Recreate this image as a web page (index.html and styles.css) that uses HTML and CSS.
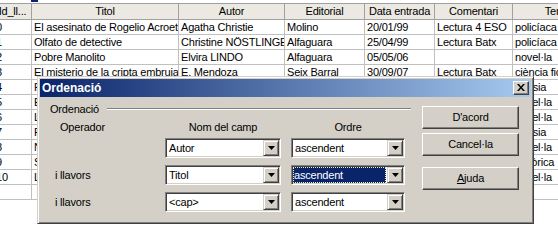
FILE: index.html
```html
<!DOCTYPE html>
<html>
<head>
<meta charset="utf-8">
<link rel="stylesheet" href="styles.css">
</head>
<body>
<div class="topstrip"><span class="tab"></span></div>
<div class="sheet">
  <div class="h">Id_ll...</div><div class="h">Titol</div><div class="h">Autor</div><div class="h">Editorial</div><div class="h">Data entrada</div><div class="h">Comentari</div><div class="h">Temàtica</div>

  <div>0</div><div>El asesinato de Rogelio Acroetd</div><div>Agatha Christie</div><div>Molino</div><div>20/01/99</div><div>Lectura 4 ESO</div><div>policíaca</div>
  <div>1</div><div>Olfato de detective</div><div>Christine NÖSTLINGER</div><div>Alfaguara</div><div>25/04/99</div><div>Lectura Batx</div><div>policíaca</div>
  <div>2</div><div>Pobre Manolito</div><div>Elvira LINDO</div><div>Alfaguara</div><div>05/05/06</div><div></div><div>novel·la</div>
  <div>3</div><div>El misterio de la cripta embrujada</div><div>E. Mendoza</div><div>Seix Barral</div><div>30/09/07</div><div>Lectura Batx</div><div>ciència ficció</div>
  <div>4</div><div>Poemes</div><div>M. Martí i Pol</div><div>Edicions 62</div><div>12/10/07</div><div></div><div>poesia</div>
  <div>5</div><div>El lazarillo de Tormes</div><div>Anònim</div><div>Vicens Vives</div><div>03/11/07</div><div></div><div>novel·la</div>
  <div>6</div><div>La plaça del Diamant</div><div>M. Rodoreda</div><div>Club Editor</div><div>15/01/08</div><div></div><div>novel·la</div>
  <div>7</div><div>Poesia completa</div><div>S. Espriu</div><div>Edicions 62</div><div>20/02/08</div><div></div><div>poesia</div>
  <div>8</div><div>Nada</div><div>C. Laforet</div><div>Destino</div><div>04/03/08</div><div></div><div>novel·la</div>
  <div>9</div><div>Soldados de Salamina</div><div>J. Cercas</div><div>Tusquets</div><div>18/04/08</div><div></div><div>històrica</div>
  <div>10</div><div>La sombra del viento</div><div>C. Ruiz Zafón</div><div>Planeta</div><div>22/05/08</div><div></div><div>novel·la</div>
  <div></div><div></div><div></div><div></div><div></div><div></div><div></div>
</div>

<div class="dialog">
  <div class="titlebar">
    <span class="title">Ordenació</span>
    <span class="close"><svg width="8" height="7" viewBox="0 0 8 7"><path d="M0 0h2l2 2.5L6 0h2L5 3.5 8 7H6L4 4.5 2 7H0l3-3.5z" fill="#000"/></svg></span>
  </div>
  <div class="dlgbody">
    <div class="panel">
      <div class="grouphead"><span>Ordenació</span><span class="rule"></span></div>
      <div class="sortgrid">
        <div class="colhead op">Operador</div>
        <div class="colhead">Nom del camp</div>
        <div class="colhead">Ordre</div>

        <div class="lbl"></div>
        <div class="combo"><span class="val">Autor</span><span class="drop"><svg width="7" height="4" viewBox="0 0 7 4"><path d="M0 0h7L3.5 4z" fill="#000"/></svg></span></div>
        <div class="combo"><span class="val">ascendent</span><span class="drop"><svg width="7" height="4" viewBox="0 0 7 4"><path d="M0 0h7L3.5 4z" fill="#000"/></svg></span></div>

        <div class="lbl">i llavors</div>
        <div class="combo"><span class="val">Titol</span><span class="drop"><svg width="7" height="4" viewBox="0 0 7 4"><path d="M0 0h7L3.5 4z" fill="#000"/></svg></span></div>
        <div class="combo"><span class="val sel">ascendent</span><span class="drop"><svg width="7" height="4" viewBox="0 0 7 4"><path d="M0 0h7L3.5 4z" fill="#000"/></svg></span></div>

        <div class="lbl">i llavors</div>
        <div class="combo"><span class="val">&lt;cap&gt;</span><span class="drop"><svg width="7" height="4" viewBox="0 0 7 4"><path d="M0 0h7L3.5 4z" fill="#000"/></svg></span></div>
        <div class="combo"><span class="val">ascendent</span><span class="drop"><svg width="7" height="4" viewBox="0 0 7 4"><path d="M0 0h7L3.5 4z" fill="#000"/></svg></span></div>
      </div>
    </div>
    <div class="buttons">
      <div class="btn">D'acord</div>
      <div class="btn">Cancel·la</div>
      <div class="btn help"><u>A</u>juda</div>
    </div>
  </div>
</div>
</body>
</html>
```

FILE: styles.css
```css
html, body {
  margin: 0;
  padding: 0;
}
body {
  width: 558px;
  height: 246px;
  overflow: hidden;
  position: relative;
  background: #fff;
  font: 11px "Liberation Sans", Arial, sans-serif;
  letter-spacing: -0.2px;
  color: #000;
}
.topstrip {
  height: 3px;
  display: flex;
}
.tab {
  margin-left: 31px;
  width: 7px;
  height: 2px;
  background: #0a246a;
}
.sheet {
  display: grid;
  grid-template-columns: 38px 147px 106px 80px 70px 78px 107px;
  grid-template-rows: 17px;
  grid-auto-rows: 15px;
  width: 626px;
  margin-left: -6px;
}
.sheet > div {
  box-sizing: border-box;
  border-right: 1px solid #c0c0c0;
  border-bottom: 1px solid #c0c0c0;
  padding-left: 2px;
  line-height: 14px;
  white-space: nowrap;
  overflow: hidden;
}
.sheet > .h {
  background: #ebe9e2;
  border-top: 1px solid #a0a0a0;
  border-right-color: #a0a0a0;
  border-bottom-color: #a0a0a0;
  text-align: center;
  line-height: 15px;
  padding: 0;
}

.dialog {
  position: absolute;
  left: 37px;
  top: 76px;
  width: 497px;
  height: 148px;
  box-sizing: border-box;
  border: 1px solid;
  border-color: #d4d0c8 #404040 #404040 #d4d0c8;
  box-shadow: inset 1px 1px 0 #fff, inset -1px -1px 0 #808080;
  padding: 2px;
  background: #d4d0c8;
  display: flex;
  flex-direction: column;
}
.titlebar {
  height: 18px;
  flex: none;
  background: linear-gradient(to right, #0a246a, #a6caf0);
  display: flex;
  align-items: center;
  justify-content: space-between;
  padding: 0 2px 0 2px;
  color: #fff;
  font-weight: bold;
  font-size: 12px;
  letter-spacing: 0;
}
.close {
  width: 16px;
  height: 14px;
  box-sizing: border-box;
  background: #d4d0c8;
  border: 1px solid;
  border-color: #fff #404040 #404040 #fff;
  box-shadow: inset -1px -1px 0 #808080;
  display: flex;
  align-items: center;
  justify-content: center;
  padding: 0 1px 1px 0;
}
.dlgbody {
  display: flex;
  padding: 5px 11px 0 10px;
  gap: 11px;
}
.panel {
  width: 361px;
  display: flex;
  flex-direction: column;
}
.grouphead {
  display: flex;
  align-items: center;
  height: 14px;
  line-height: 14px;
}
.rule {
  flex: 1;
  margin-left: 8px;
  height: 0;
  border-top: 1px solid #808080;
  border-bottom: 1px solid #fff;
}
.sortgrid {
  display: grid;
  grid-template-columns: 105px 116px 114px;
  grid-template-rows: 11px 20px 20px 20px;
  column-gap: 10px;
  row-gap: 7px;
  margin-top: 4px;
}
.colhead {
  height: 14px;
  line-height: 14px;
  text-align: center;
  align-self: start;
}
.colhead.op {
  text-align: left;
  padding-left: 10px;
}
.lbl {
  padding-left: 5px;
  line-height: 20px;
}
.combo {
  box-sizing: border-box;
  height: 20px;
  background: #fff;
  border: 1px solid;
  border-color: #808080 #fff #fff #808080;
  box-shadow: inset 1px 1px 0 #404040, inset -1px -1px 0 #d4d0c8;
  padding: 1px 1px 1px 2px;
  display: flex;
  gap: 1px;
}
.val {
  flex: 1;
  line-height: 16px;
  padding-left: 1px;
}
.val.sel {
  background: #0a246a;
  color: #fff;
  outline: 1px dotted #f0f0c0;
  outline-offset: -1px;
  margin-left: -1px;
}
.drop {
  width: 16px;
  height: 16px;
  box-sizing: border-box;
  background: #d4d0c8;
  border: 1px solid;
  border-color: #d4d0c8 #404040 #404040 #d4d0c8;
  box-shadow: inset 1px 1px 0 #fff, inset -1px -1px 0 #808080;
  display: flex;
  align-items: center;
  justify-content: center;
}
.buttons {
  width: 97px;
  display: flex;
  flex-direction: column;
  padding-top: 4px;
}
.btn {
  box-sizing: border-box;
  height: 23px;
  border: 1px solid;
  border-color: #fff #404040 #404040 #fff;
  box-shadow: inset -1px -1px 0 #808080;
  text-align: center;
  line-height: 20px;
  margin-bottom: 4px;
}
.btn.help {
  margin-top: 7px;
}
```
